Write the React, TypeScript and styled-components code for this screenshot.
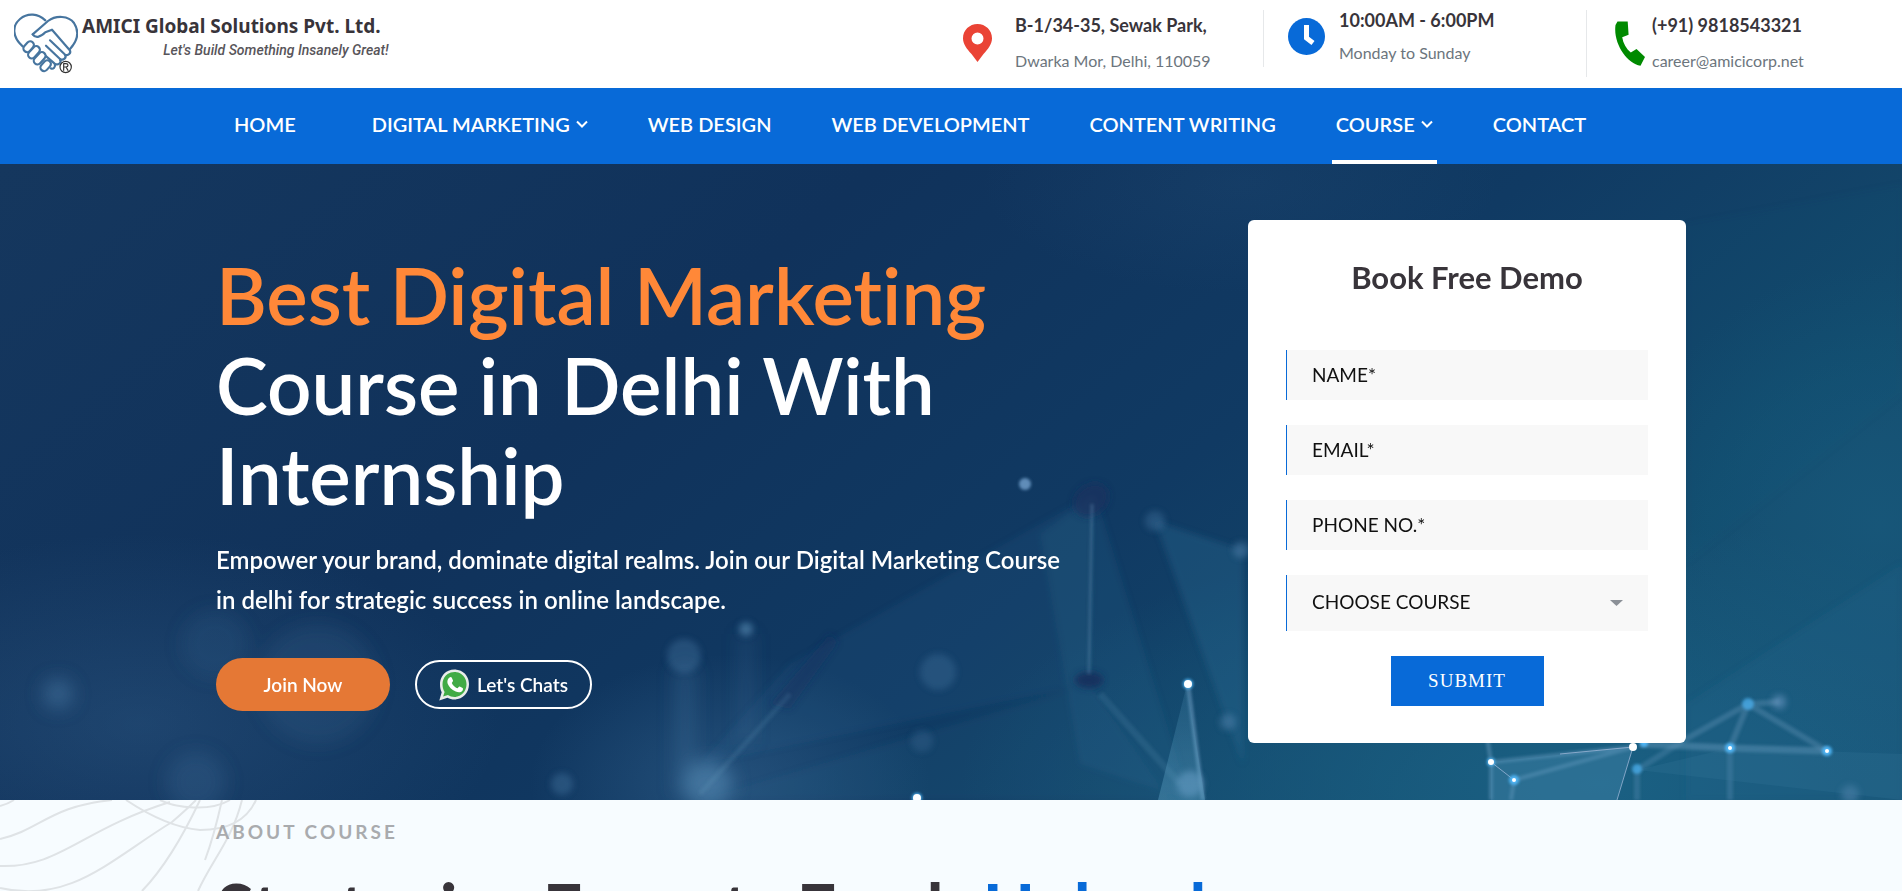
import React from "react";
import styled, { createGlobalStyle, css } from "styled-components";

const BLUE = "#086ad8";
const INK = "#38343a";

const GlobalStyle = createGlobalStyle`
  *, *::before, *::after { box-sizing: border-box; }
  body {
    margin: 0;
    background: #f7fcff;
    color: ${INK};
    font-family: Lato, "Liberation Sans", sans-serif;
    font-variant-ligatures: none;
  }
  h1, h2, p, ul { margin: 0; padding: 0; }
  a { color: inherit; text-decoration: none; }
`;

const Page = styled.div`
  height: 100vh;
  overflow: hidden;
`;

/* ---------- top bar ---------- */

const TopBar = styled.header`
  display: flex;
  justify-content: space-between;
  height: 88px;
  padding: 0 14px;
  background: #fff;
`;

const Brand = styled.a`
  display: flex;
  align-items: flex-start;
  gap: 4px;
  padding-top: 13px;
`;

const BrandText = styled.span`
  display: flex;
  flex-direction: column;
  align-items: flex-end;
  white-space: nowrap;
`;

const BrandName = styled.span`
  padding-right: 8px;
  font: 700 19px/26px "Noto Sans", "Open Sans", sans-serif;
`;

const BrandTagline = styled.span`
  font: italic 500 14px/22px Roboto, sans-serif;
  color: #58555a;
`;

const Contacts = styled.div`
  display: grid;
  grid-template-columns: 300px 323px 302px;
  align-items: start;
  padding-top: 10px;
`;

const ContactItem = styled.div<{ $compact?: boolean; $ruled?: boolean; $indent: number; $gap: number }>`
  display: flex;
  align-items: center;
  gap: ${(p) => p.$gap}px;
  padding: ${(p) => (p.$compact ? "0 0 4px" : "5px 0 6px")};
  padding-left: ${(p) => p.$indent}px;
  border-left: ${(p) => (p.$ruled ? "1px solid #e6e8ea" : "0")};
  svg { flex: none; }
`;

const ContactText = styled.div<{ $gap: number }>`
  display: flex;
  flex-direction: column;
  gap: ${(p) => p.$gap}px;
  line-height: 20px;
  white-space: nowrap;
`;

const ContactTitle = styled.strong`
  font-size: 18px;
  font-weight: 700;
`;

const ContactNote = styled.span`
  font-size: 16px;
  color: #6c757d;
`;

/* ---------- navigation ---------- */

const NavBar = styled.nav`
  height: 76px;
  background: ${BLUE};
  color: #fff;
`;

const Container = styled.div`
  max-width: 1500px;
  margin: 0 auto;
  padding: 0 15px;
`;

const NavList = styled.ul`
  display: flex;
  gap: 52px;
  padding-left: 14px;
  list-style: none;
`;

const NavLink = styled.a<{ $active?: boolean; $wide?: boolean }>`
  display: flex;
  align-items: center;
  gap: 6px;
  height: 76px;
  padding: 0 4px;
  margin-right: ${(p) => (p.$wide ? "16px" : "0")};
  border-bottom: 4px solid ${(p) => (p.$active ? "#fff" : "transparent")};
  font-size: 20px;
  font-weight: 600;
  line-height: 24px;
  white-space: nowrap;
`;

/* ---------- hero ---------- */

const Hero = styled.section`
  position: relative;
  background: #11345c;
  overflow: hidden;
`;

const HeroArt = styled.svg`
  position: absolute;
  inset: 0;
  width: 100%;
  height: 100%;
`;

const HeroRow = styled(Container)`
  position: relative;
  display: grid;
  grid-template-columns: 1fr 438px;
  align-items: start;
  padding-top: 56px;
  padding-bottom: 57px;
`;

const HeroCopy = styled.div`
  max-width: 864px;
  padding-top: 30px;
  color: #fff;
`;

const HeroTitle = styled.h1`
  font-size: 78px;
  font-weight: 600;
  line-height: 90px;
  em {
    display: block;
    font-style: normal;
    color: #ff8838;
  }
`;

const HeroLead = styled.p`
  margin-top: 20px;
  font-size: 24px;
  font-weight: 600;
  line-height: 40px;
`;

const Actions = styled.div`
  display: flex;
  align-items: center;
  gap: 25px;
  margin-top: 38px;
`;

const Pill = styled.a<{ $outline?: boolean }>`
  display: flex;
  align-items: center;
  justify-content: center;
  gap: 8px;
  border-radius: 27px;
  font-size: 19px;
  font-weight: 600;
  line-height: 24px;
  ${(p) =>
    p.$outline
      ? css`
          width: 177px;
          height: 49px;
          border: 2px solid #fff;
        `
      : css`
          width: 174px;
          height: 53px;
          background: #e57835;
        `}
`;

/* ---------- demo form ---------- */

const DemoForm = styled.form`
  display: flex;
  flex-direction: column;
  gap: 25px;
  padding: 38px 38px 37px;
  border-radius: 6px;
  background: #fff;
`;

const FormTitle = styled.h2`
  margin-bottom: 29px;
  font-size: 31px;
  font-weight: 700;
  line-height: 38px;
  text-align: center;
`;

const fieldStyle = css`
  display: block;
  width: 100%;
  padding: 0 25px 2px;
  border: 0;
  border-left: 1px solid ${BLUE};
  border-radius: 0;
  background: #f8f8f8;
  color: #111;
  font: 400 19px/24px Lato, "Liberation Sans", sans-serif;
`;

const Field = styled.input`
  ${fieldStyle}
  height: 50px;
  &::placeholder { color: #111; opacity: 1; }
`;

const SelectWrap = styled.div`
  display: grid;
  align-items: center;
  > * { grid-area: 1 / 1; }
  svg { justify-self: end; margin-right: 25px; pointer-events: none; }
`;

const Select = styled.select`
  ${fieldStyle}
  height: 56px;
  appearance: none;
`;

const Submit = styled.button`
  align-self: center;
  width: 153px;
  height: 50px;
  border: 0;
  background: ${BLUE};
  color: #fff;
  font: 400 19px/24px "Liberation Serif", serif;
  letter-spacing: 1px;
`;

/* ---------- about ---------- */

const About = styled.section`
  position: relative;
  background: #f7fcff;
`;

const AboutArt = styled.svg`
  position: absolute;
  top: 0;
  left: 0;
`;

const AboutBody = styled(Container)`
  position: relative;
  padding-top: 20px;
`;

const Eyebrow = styled.p`
  font-size: 19px;
  font-weight: 700;
  line-height: 24px;
  letter-spacing: 3px;
  color: #a9abae;
`;

const AboutTitle = styled.h2`
  margin-top: 24px;
  font-size: 70px;
  font-weight: 700;
  line-height: 80px;
  white-space: nowrap;
  span { color: ${BLUE}; }
`;

/* ---------- drawings ---------- */

const LogoMark = () => (
  <svg width="64" height="62" viewBox="40 38 192 186" fill="none" stroke="#47759f" strokeWidth="6.5" strokeLinejoin="round" strokeLinecap="round">
    <path d="M66 138C34 110 34 76 58 56c24-20 54-16 76 4" />
    <path d="M96 102L142 62c24-18 62-16 78 6 18 28 10 54-12 78" />
    <path d="M96 102c8 12 22 10 38-6l20-8 52 60c8 10-4 20-14 14l-44-42M192 162c8 10-4 20-14 14l-42-40M178 178c6 10-6 18-16 12l-28-24M150 204c8 4 16-4 12-12" />
    <g fill="#fff">
      <rect x="66" y="128" width="36" height="22" rx="11" transform="rotate(-48 84 139)" />
      <rect x="79" y="145" width="42" height="22" rx="11" transform="rotate(-48 100 156)" />
      <rect x="96" y="163" width="42" height="22" rx="11" transform="rotate(-48 117 174)" />
      <rect x="117" y="185" width="36" height="22" rx="11" transform="rotate(-48 135 196)" />
    </g>
    <g stroke="#333" strokeWidth="3.5">
      <circle cx="195" cy="200" r="17" fill="#fff" />
      <path d="M189 210v-20h7c8 0 8 10 0 10h-7m7 0l6 10" />
    </g>
  </svg>
);

const PinIcon = () => (
  <svg width="29" height="38" viewBox="0 0 29 38" aria-hidden="true">
    <path fill="#ea4335" fillRule="evenodd" d="M14.500 0C22.500 0 29 6.200 29 14.200 29 20 25 25 20.500 30L14.500 38 8.500 30C4 25 0 20 0 14.200 0 6.200 6.500 0 14.500 0zm0 8.500a6 6 0 1 0 0 12 6 6 0 0 0 0-12z" />
  </svg>
);

const ClockIcon = () => (
  <svg width="37" height="37" viewBox="0 0 37 37" aria-hidden="true">
    <circle cx="18.500" cy="18.500" r="18.500" fill={BLUE} />
    <path d="M18.500 7v13l6.500 5" fill="none" stroke="#fff" strokeWidth="5" />
  </svg>
);

const PhoneIcon = () => (
  <svg width="30" height="45" viewBox="0 0 30 45" aria-hidden="true">
    <path fill="#008a00" d="M2.500.5h10.200l.9 13.200-6.400 2.500c1 6.300 4 11.600 8.600 15.300L21.500 28l8.500 8-4.500 8.800C11.500 42-2 22 .5 4z" />
  </svg>
);

const Chevron = () => (
  <svg width="12" height="9" viewBox="0 0 12 9" fill="none" stroke="#fff" strokeWidth="2" aria-hidden="true">
    <path d="M1 1.500l5 5 5-5" />
  </svg>
);

const WhatsAppIcon = () => (
  <svg width="30" height="32" viewBox="0 0 30 32" aria-hidden="true">
    <path fill="#e9ecea" d="M15.500.5C24 .5 30 7 30 15.300 30 24 23.500 30.500 15.500 30.500c-2.600 0-5-.7-7-1.800L.3 31.500l2.400-8.200C1.500 21 1 18.200 1 15.300 1 7 7 .5 15.500.5z" />
    <path fill="#41ab45" d="M15.500 3C22.400 3 27.500 8.300 27.500 15.300S22.400 28 15.500 28c-2.500 0-4.700-.7-6.600-2l-4.800 1.600 1.500-4.700c-1.400-2.100-2.100-4.700-2.100-7.600C3.500 8.300 8.600 3 15.500 3z" />
    <path fill="#fff" d="M10.500 8.500c1-.9 2-.6 2.400.4l1.100 2.700c.3.800-1 1.900-1.200 2.300 1.200 2.600 3 4.200 5.600 5.400.6-.4 1.600-2.100 2.300-1.800l2.900 1.500c.6.300.4 1.900-.2 2.700-1.400 1.900-4 2-6.700.9-4.200-1.800-6.700-4.600-8-7.900-.9-2.600.2-4.900 1.800-6.200z" />
  </svg>
);

const HeroBackdrop = () => (
  <HeroArt viewBox="0 0 1902 636" preserveAspectRatio="xMidYMid slice" aria-hidden="true">
    <defs>
      <linearGradient id="base" x1="0" y1="0" x2="1" y2="0.400">
        <stop offset="0" stopColor="#15375e" />
        <stop offset="0.400" stopColor="#10325b" />
        <stop offset="0.700" stopColor="#103a63" />
        <stop offset="1" stopColor="#144c6e" />
      </linearGradient>
      <radialGradient id="teal">
        <stop offset="0" stopColor="#1a6083" />
        <stop offset="1" stopColor="#1a6083" stopOpacity="0" />
      </radialGradient>
      <radialGradient id="haze">
        <stop offset="0" stopColor="#3a6a96" stopOpacity="0.600" />
        <stop offset="1" stopColor="#3a6a96" stopOpacity="0" />
      </radialGradient>
      <linearGradient id="fade" x1="0" y1="0" x2="0" y2="1">
        <stop offset="0" stopColor="#5a9dc0" stopOpacity="0.150" />
        <stop offset="1" stopColor="#5a9dc0" stopOpacity="0.450" />
      </linearGradient>
      <filter id="soft1"><feGaussianBlur stdDeviation="1.500" /></filter>
      <filter id="soft3"><feGaussianBlur stdDeviation="3" /></filter>
      <filter id="soft8" x="-50%" y="-50%" width="200%" height="200%"><feGaussianBlur stdDeviation="9" /></filter>
    </defs>
    <rect width="1902" height="636" fill="url(#base)" />
    <ellipse cx="1600" cy="620" rx="640" ry="260" fill="url(#teal)" />
    <ellipse cx="1880" cy="360" rx="260" ry="260" fill="url(#teal)" opacity="0.500" />
    <ellipse cx="140" cy="560" rx="360" ry="190" fill="url(#haze)" opacity="0.550" />
    <ellipse cx="730" cy="620" rx="200" ry="130" fill="url(#haze)" opacity="0.800" />
    <ellipse cx="1240" cy="20" rx="260" ry="110" fill="url(#haze)" opacity="0.200" />

    <g fill="#2c6b93" filter="url(#soft3)">
      <path d="M1093 330L790 500 700 600 1090 520z" opacity="0.140" />
      <path d="M1040 370L1095 330 1190 636 1080 600z" opacity="0.200" />
      <path d="M1155 357L1243 386V600L1228 560z" opacity="0.350" />
      <path d="M700 636L1089 520 1170 636z" opacity="0.120" />
      <path d="M1686 60L1902 20V230L1686 400z" opacity="0.050" />
      <path d="M1686 540L1902 400V636H1686z" opacity="0.200" />
    </g>

    <g fill="#4d80aa" filter="url(#soft8)">
      <circle cx="58" cy="530" r="15" opacity="0.450" />
      <circle cx="318" cy="520" r="60" opacity="0.140" />
      <circle cx="215" cy="480" r="34" opacity="0.120" />
      <circle cx="196" cy="618" r="30" opacity="0.200" />
      <rect x="675" y="500" width="20" height="136" rx="10" opacity="0.250" />
      <circle cx="708" cy="620" r="24" opacity="0.750" />
      <rect x="740" y="470" width="12" height="110" opacity="0.200" />
    </g>
    <g fill="#5688b2" filter="url(#soft3)">
      <circle cx="684" cy="492" r="17" opacity="0.300" />
      <circle cx="746" cy="465" r="7" opacity="0.600" />
      <circle cx="938" cy="508" r="18" opacity="0.250" />
      <circle cx="922" cy="577" r="11" opacity="0.200" />
      <circle cx="562" cy="620" r="11" opacity="0.300" />
      <circle cx="1155" cy="357" r="10" opacity="0.300" />
      <circle cx="1241" cy="386" r="8" opacity="0.450" />
      <circle cx="1228" cy="558" r="8" opacity="0.450" />
      <circle cx="1190" cy="620" r="13" opacity="0.800" />
      <circle cx="1779" cy="538" r="7" opacity="0.800" />
      <circle cx="1850" cy="630" r="9" opacity="0.500" />
    </g>

    <g fill="#18305f" filter="url(#soft3)">
      <ellipse cx="1091" cy="336" rx="19" ry="15" transform="rotate(-40 1091 336)" opacity="0.750" />
      <ellipse cx="1089" cy="516" rx="14" ry="8" />
      <path d="M770 540L830 470 838 478 790 545z" opacity="0.400" />
    </g>

    <g fill="none" stroke="#6f9fc4" filter="url(#soft1)">
      <path d="M1092 340L1089 510" strokeWidth="3" opacity="0.300" />
      <path d="M1100 530L1180 620" strokeWidth="7" opacity="0.150" />
      <path d="M790 530L700 630" strokeWidth="5" opacity="0.150" />
      <path d="M1188 520L1203 636" strokeWidth="4" opacity="0.600" />
      <path d="M1686 575L1748 540M1748 540L1730 584M1748 540L1827 587M1748 540L1779 538" strokeWidth="6" opacity="0.300" />
      <path d="M1640 580L1730 584 1827 587" strokeWidth="7" opacity="0.400" />
      <path d="M1637 606L1686 575M1730 584V636M1637 606V636" strokeWidth="6" opacity="0.250" />
      <path d="M1482 540L1491 598 1633 583M1514 616L1633 583M1491 598V636M1514 616L1511 636" strokeWidth="4" opacity="0.450" />
    </g>
    <path d="M1187 520L1158 636H1205z" fill="url(#fade)" />
    <path d="M1491 598L1633 583 1617 636H1491z" fill="#4e8fb5" opacity="0.350" />
    <path d="M1491 598L1514 616M1560 590L1633 583L1617 636" fill="none" stroke="#a9bfe0" strokeWidth="1" opacity="0.700" />
    <path d="M1730 584L1637 606 1902 636V590z" fill="#3a7ba0" opacity="0.200" />

    <g fill="#4db4f4" filter="url(#soft1)">
      <circle cx="1025" cy="320" r="6" fill="#6e9cc8" opacity="0.850" />
      <circle cx="1188" cy="520" r="5" />
      <circle cx="917" cy="634" r="5" />
      <circle cx="1491" cy="598" r="4" />
      <circle cx="1514" cy="616" r="5" />
      <circle cx="1637" cy="605" r="5" opacity="0.700" />
      <circle cx="1644" cy="579" r="4" />
      <circle cx="1730" cy="584" r="5" />
      <circle cx="1827" cy="587" r="5" />
      <circle cx="1748" cy="540" r="6" opacity="0.700" />
    </g>
    <g fill="#fff">
      <circle cx="1188" cy="520" r="4" />
      <circle cx="917" cy="634" r="4" />
      <circle cx="1491" cy="598" r="3" />
      <circle cx="1633" cy="583" r="4" />
      <circle cx="1514" cy="616" r="2" />
      <circle cx="1730" cy="584" r="2" />
      <circle cx="1827" cy="587" r="2" />
    </g>
  </HeroArt>
);

const Swirls = () => (
  <AboutArt width="280" height="91" viewBox="0 0 280 91" fill="none" stroke="#dfe3e6" strokeWidth="2" aria-hidden="true">
    <path d="M0 6Q8 4 14 0" />
    <path d="M0 39C40 30 50 6 112 0" />
    <path d="M0 66C60 68 80 30 170 2" />
    <path d="M0 88C70 104 110 60 172 22Q186 10 196 0" />
    <path d="M142 91C166 66 184 34 200 0" />
    <path d="M198 91C212 60 232 40 242 0" />
    <path d="M126 0C150 16 176 28 200 30 230 30 248 18 256 0" />
    <path d="M160 0C176 8 210 12 230 0" />
    <path d="M205 60C214 36 218 18 222 0" />
  </AboutArt>
);

/* ---------- page ---------- */

const links = [
  { label: "HOME", wide: true },
  { label: "DIGITAL MARKETING", menu: true },
  { label: "WEB DESIGN" },
  { label: "WEB DEVELOPMENT" },
  { label: "CONTENT WRITING" },
  { label: "COURSE", menu: true, active: true },
  { label: "CONTACT" },
];

export default function App() {
  return (
    <Page>
      <GlobalStyle />
      <TopBar>
        <Brand href="#">
          <LogoMark />
          <BrandText>
            <BrandName>AMICI Global Solutions Pvt. Ltd.</BrandName>
            <BrandTagline>Let's Build Something Insanely Great!</BrandTagline>
          </BrandText>
        </Brand>
        <Contacts>
          <ContactItem $indent={0} $gap={23}>
            <PinIcon />
            <ContactText $gap={16}>
              <ContactTitle>B-1/34-35, Sewak Park,</ContactTitle>
              <ContactNote>Dwarka Mor, Delhi, 110059</ContactNote>
            </ContactText>
          </ContactItem>
          <ContactItem $compact $ruled $indent={24} $gap={14}>
            <ClockIcon />
            <ContactText $gap={13}>
              <ContactTitle>10:00AM - 6:00PM</ContactTitle>
              <ContactNote>Monday to Sunday</ContactNote>
            </ContactText>
          </ContactItem>
          <ContactItem $ruled $indent={28} $gap={7}>
            <PhoneIcon />
            <ContactText $gap={16}>
              <ContactTitle>(+91) 9818543321</ContactTitle>
              <ContactNote>career@amicicorp.net</ContactNote>
            </ContactText>
          </ContactItem>
        </Contacts>
      </TopBar>

      <NavBar>
        <Container>
          <NavList>
            {links.map((l) => (
              <li key={l.label}>
                <NavLink href="#" $active={l.active} $wide={l.wide}>
                  {l.label}
                  {l.menu && <Chevron />}
                </NavLink>
              </li>
            ))}
          </NavList>
        </Container>
      </NavBar>

      <Hero>
        <HeroBackdrop />
        <HeroRow>
          <HeroCopy>
            <HeroTitle>
              <em>Best Digital Marketing</em> Course in Delhi With Internship
            </HeroTitle>
            <HeroLead>
              Empower your brand, dominate digital realms. Join our Digital Marketing Course in delhi for strategic
              success in online landscape.
            </HeroLead>
            <Actions>
              <Pill href="#">Join Now</Pill>
              <Pill href="#" $outline>
                <WhatsAppIcon />
                Let's Chats
              </Pill>
            </Actions>
          </HeroCopy>
          <DemoForm onSubmit={(e) => e.preventDefault()}>
            <FormTitle>Book Free Demo</FormTitle>
            <Field type="text" aria-label="Name" placeholder="NAME*" />
            <Field type="email" aria-label="Email" placeholder="EMAIL*" />
            <Field type="tel" aria-label="Phone number" placeholder="PHONE NO.*" />
            <SelectWrap>
              <Select aria-label="Choose course">
                <option>CHOOSE COURSE</option>
              </Select>
              <svg width="13" height="6" viewBox="0 0 13 6" aria-hidden="true">
                <path d="M0 0h13L6.500 6z" fill="#8b9097" />
              </svg>
            </SelectWrap>
            <Submit type="submit">SUBMIT</Submit>
          </DemoForm>
        </HeroRow>
      </Hero>

      <About>
        <Swirls />
        <AboutBody>
          <Eyebrow>ABOUT COURSE</Eyebrow>
          <AboutTitle>
            Strategies Experts Fresh <span>Upload</span>
          </AboutTitle>
        </AboutBody>
      </About>
    </Page>
  );
}
